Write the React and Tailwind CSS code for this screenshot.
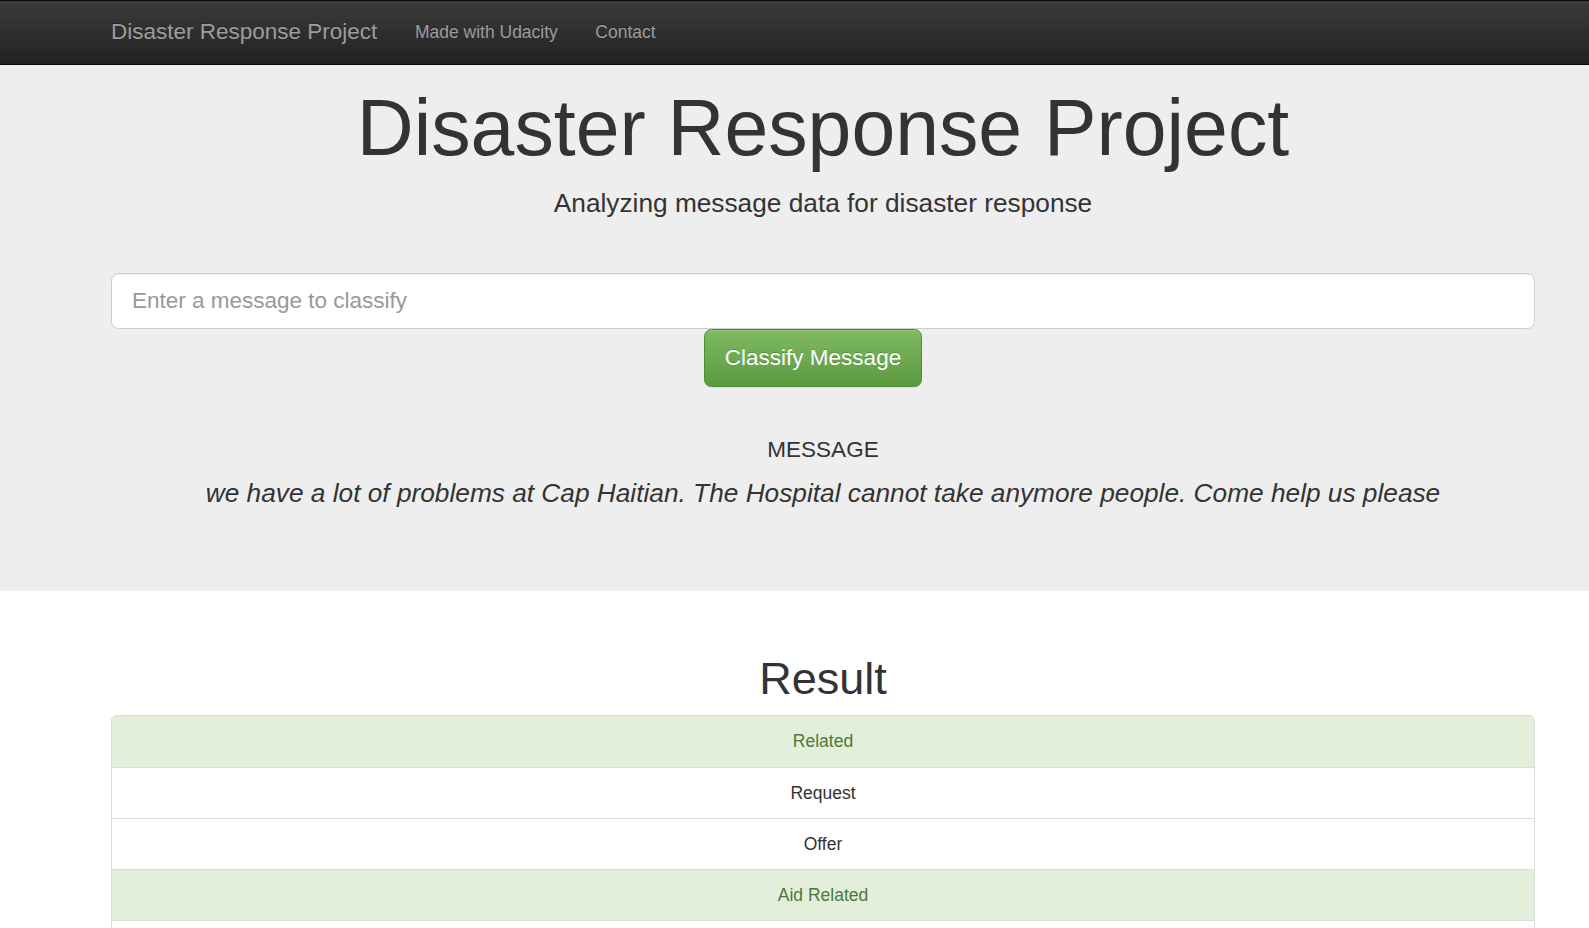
import React from 'react';

const categories = [
  { name: 'Related', on: true },
  { name: 'Request', on: false },
  { name: 'Offer', on: false },
  { name: 'Aid Related', on: true },
  { name: 'Medical Help', on: false },
];

function Navbar() {
  return (
    <nav className="h-[65px] border-y border-[#080808] bg-linear-to-b from-[#3c3c3c] to-[#222222]">
      <div className="flex h-full items-center gap-[37.5px] pl-[111px] pr-[54px] text-[#9d9d9d]">
        <span className="text-[22.5px] leading-none [text-shadow:0_-1px_0_rgba(0,0,0,0.25)]">
          Disaster Response Project
        </span>
        <span className="text-[17.5px] leading-none [text-shadow:0_-1px_0_rgba(0,0,0,0.25)]">Made with Udacity</span>
        <span className="text-[17.5px] leading-none [text-shadow:0_-1px_0_rgba(0,0,0,0.25)]">Contact</span>
      </div>
    </nav>
  );
}

function Jumbotron() {
  return (
    <div className="bg-[#eeeeee] pt-[20px] pb-[78px]">
      <div className="pl-[111px] pr-[54px] text-center">
        <h1 className="text-[78.75px] leading-[1.1] text-[#333333]">Disaster Response Project</h1>
        <p className="mt-[13.5px] text-[26.25px] leading-[37.5px] text-[#333333]">
          Analyzing message data for disaster response
        </p>

        <div className="mt-[50.5px]">
          <input
            type="text"
            placeholder="Enter a message to classify"
            className="block h-[56px] w-full rounded-[7.5px] border border-[#cccccc] bg-white px-[20px] text-[22.5px] text-[#555555] shadow-[inset_0_1px_1px_rgba(0,0,0,0.075)] outline-none placeholder:text-[#999999]"
          />
          <div className="flex justify-center">
            <button className="mr-[20px] h-[57.5px] rounded-[7.5px] border border-[#4f8a38] bg-linear-to-b from-[#80bb64] to-[#5b993f] px-[20px] text-[22.5px] text-white [text-shadow:0_-1px_0_rgba(0,0,0,0.2)] shadow-[inset_0_1px_0_rgba(255,255,255,0.15),0_1px_1px_rgba(0,0,0,0.075)]">
              Classify Message
            </button>
          </div>
        </div>

        <h4 className="mt-[51.5px] text-[22.5px] leading-[1.1] text-[#333333]">MESSAGE</h4>
        <p className="mt-[12.5px] text-[26.25px] italic leading-[37.5px] text-[#333333]">
          we have a lot of problems at Cap Haitian. The Hospital cannot take anymore people. Come help us please
        </p>
      </div>
    </div>
  );
}

function Results() {
  return (
    <div className="pl-[111px] pr-[54px] pb-[40px]">
      <h1 className="mt-[63px] text-center text-[45px] leading-[1.1] text-[#333333]">Result</h1>
      <ul className="mt-[12px] divide-y divide-[#dddddd] overflow-hidden rounded-[5px] border border-[#dddddd]">
        {categories.map((c) => (
          <li
            key={c.name}
            className={
              c.on
                ? 'flex h-[51.25px] items-center justify-center bg-[#e3efda] text-[17.5px] text-[#4a7a3c]'
                : 'flex h-[51.25px] items-center justify-center bg-white text-[17.5px] text-[#333333]'
            }
          >
            {c.name}
          </li>
        ))}
      </ul>
    </div>
  );
}

export default function App() {
  return (
    <div className="min-h-screen bg-white font-['Liberation_Sans',Arial,sans-serif]">
      <Navbar />
      <Jumbotron />
      <Results />
    </div>
  );
}
